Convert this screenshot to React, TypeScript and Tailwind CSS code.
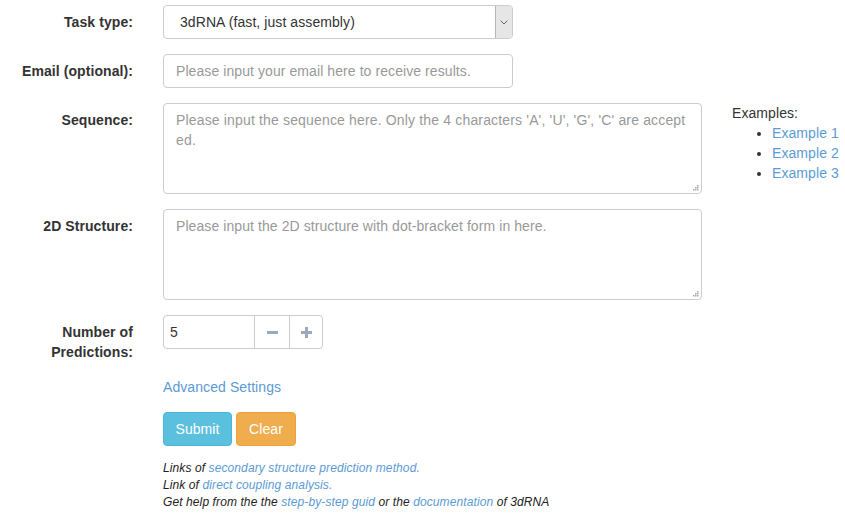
import React from "react";

const label = "w-[148px] shrink-0 pr-[15px] pt-[7px] text-right font-bold text-[14px] leading-[20px] text-[#333]";
const link = "text-[#5b9bd5]";

function Grip() {
  return (
    <svg className="pointer-events-none absolute right-[3px] bottom-[3px]" width="7" height="7" viewBox="0 0 7 7">
      <rect x="5" y="1" width="1.5" height="1.5" fill="#aaa" />
      <rect x="3" y="3" width="1.5" height="1.5" fill="#aaa" />
      <rect x="5" y="3" width="1.5" height="1.5" fill="#aaa" />
      <rect x="1" y="5" width="1.5" height="1.5" fill="#aaa" />
      <rect x="3" y="5" width="1.5" height="1.5" fill="#aaa" />
      <rect x="5" y="5" width="1.5" height="1.5" fill="#aaa" />
    </svg>
  );
}

export default function App() {
  return (
    <div className="min-h-[518px] bg-white pt-[5px] text-[14px] leading-[20px] text-[#333] tracking-[0.08px]" style={{ fontFamily: '"Liberation Sans", Arial, sans-serif' }}>
      {/* Task type */}
      <div className="flex mb-[15px]">
        <div className={label}>Task type:</div>
        <div className="pl-[15px]">
          <div className="relative w-[350px] h-[34px]">
            <select className="appearance-none w-full h-full border border-[#ccc] rounded-[4px] bg-white pl-[16px] text-[14px] text-[#333] outline-none tracking-[0.08px]" defaultValue="a">
              <option value="a">3dRNA (fast, just assembly)</option>
            </select>
            <div className="pointer-events-none absolute right-[1px] top-[1px] bottom-[1px] w-[17px] bg-[#e6e6e6] border-l border-[#b5b5b5] rounded-r-[3px] flex items-center justify-center">
              <svg width="8" height="5" viewBox="0 0 8 5"><path d="M0.5 0.5 L4 4 L7.5 0.5" fill="none" stroke="#666" strokeWidth="1" /></svg>
            </div>
          </div>
        </div>
      </div>

      {/* Email */}
      <div className="flex mb-[15px]">
        <div className={label}>Email (optional):</div>
        <div className="pl-[15px]">
          <input className="w-[350px] h-[34px] border border-[#ccc] rounded-[4px] px-[12px] text-[14px] placeholder-[#999] outline-none tracking-[0.08px]" placeholder="Please input your email here to receive results." />
        </div>
      </div>

      {/* Sequence */}
      <div className="flex mb-[15px]">
        <div className={label}>Sequence:</div>
        <div className="pl-[15px] pr-[15px]">
          <div className="relative">
            <textarea className="block w-[539px] h-[91px] resize-none border border-[#ccc] rounded-[4px] px-[12px] py-[6px] text-[14px] leading-[20px] placeholder-[#999] outline-none break-all tracking-[0.16px]" placeholder="Please input the sequence here. Only the 4 characters 'A', 'U', 'G', 'C' are accepted." />
            <Grip />
          </div>
        </div>
        <div className="pl-[15px]">
          <div>Examples:</div>
          <ul className="list-disc pl-[40px]">
            <li><a className={link}>Example 1</a></li>
            <li><a className={link}>Example 2</a></li>
            <li><a className={link}>Example 3</a></li>
          </ul>
        </div>
      </div>

      {/* 2D structure */}
      <div className="flex mb-[15px]">
        <div className={label}>2D Structure:</div>
        <div className="pl-[15px]">
          <div className="relative">
            <textarea className="block w-[539px] h-[91px] resize-none border border-[#ccc] rounded-[4px] px-[12px] py-[6px] text-[14px] leading-[20px] placeholder-[#999] outline-none tracking-[0.08px]" placeholder="Please input the 2D structure with dot-bracket form in here." />
            <Grip />
          </div>
        </div>
      </div>

      {/* Number of predictions */}
      <div className="flex mb-[15px]">
        <div className={label}>Number of<br />Predictions:</div>
        <div className="pl-[15px]">
          <div className="flex h-[34px] w-[160px] border border-[#ccc] rounded-[4px]">
            <input className="w-[90px] h-full px-[6px] text-[14px] text-[#333] outline-none rounded-l-[4px]" defaultValue="5" />
            <div className="w-[35px] h-full border-l border-[#ccc] flex items-center justify-center">
              <div className="w-[11px] h-[3px] bg-[#9aa9bd]" />
            </div>
            <div className="flex-1 h-full border-l border-[#ccc] flex items-center justify-center">
              <svg width="11" height="11" viewBox="0 0 11 11"><path d="M4 0h3v4h4v3H7v4H4V7H0V4h4z" fill="#9aa9bd" /></svg>
            </div>
          </div>
        </div>
      </div>

      {/* Advanced */}
      <div className="flex mb-[15px]">
        <div className="w-[148px] shrink-0" />
        <div className="pl-[15px]"><a className={link}>Advanced Settings</a></div>
      </div>

      {/* Buttons */}
      <div className="flex">
        <div className="w-[148px] shrink-0" />
        <div className="pl-[15px]">
          <div className="flex gap-[4px]">
            <button className="h-[34px] w-[69px] rounded-[4px] bg-[#5bc0de] border border-[#46b8da] text-white text-[14px] tracking-[0.08px]">Submit</button>
            <button className="h-[34px] w-[60px] rounded-[4px] bg-[#f0ad4e] border border-[#eea236] text-white text-[14px] tracking-[0.08px]">Clear</button>
          </div>
          <div className="mt-[14px] text-[12px] leading-[17px] italic text-[#222] tracking-[0.1px]">
            <div>Links of <a className={link}>secondary structure prediction method.</a></div>
            <div>Link of <a className={link}>direct coupling analysis.</a></div>
            <div>Get help from the the <a className={link}>step-by-step guid</a> or the <a className={link}>documentation</a> of 3dRNA</div>
          </div>
        </div>
      </div>
    </div>
  );
}
